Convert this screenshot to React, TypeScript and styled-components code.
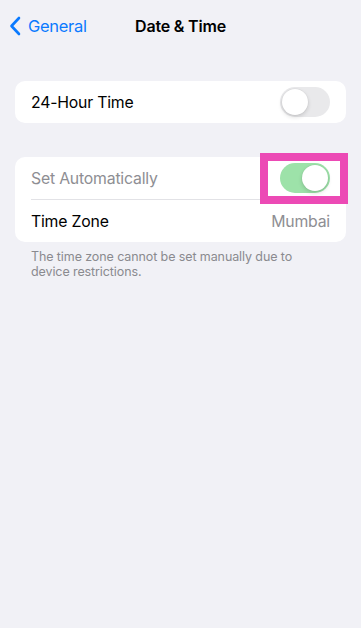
import * as React from 'react';
import styled, { createGlobalStyle } from 'styled-components';

const GlobalStyle = createGlobalStyle`
  html, body {
    margin: 0;
    padding: 0;
    background: #f1f1f6;
  }
  body {
    font-family: Inter, "Liberation Sans", Arial, sans-serif;
    -webkit-font-smoothing: antialiased;
  }
`;

const Page = styled.div`
  min-height: 628px;
  background: #f1f1f6;
  padding: 0 15px;
  box-sizing: border-box;
`;

const NavBar = styled.div`
  position: relative;
  height: 36px;
  padding-top: 8px;
  display: flex;
  align-items: center;
`;

const BackButton = styled.div`
  display: flex;
  align-items: center;
  gap: 7px;
  margin-left: -6px;
  color: #0a7aff;
  font-size: 16.5px;
  letter-spacing: -0.3px;
`;

const Title = styled.div`
  position: absolute;
  left: 0;
  right: 0;
  top: 8px;
  height: 36px;
  display: flex;
  align-items: center;
  justify-content: center;
  font-size: 16px;
  font-weight: 600;
  color: #000;
  letter-spacing: -0.2px;
  pointer-events: none;
`;

const Card = styled.div<{ $top: number }>`
  margin-top: ${(p) => p.$top}px;
  background: #fff;
  border-radius: 10px;
  padding-left: 16px;
`;

const Row = styled.div<{ $divider?: boolean }>`
  height: 42px;
  display: flex;
  align-items: center;
  justify-content: space-between;
  padding-right: 16px;
  border-bottom: ${(p) => (p.$divider ? '1px solid #e2e2e6' : 'none')};
`;

const Label = styled.span<{ $muted?: boolean }>`
  font-size: 15.8px;
  color: ${(p) => (p.$muted ? '#8e8e93' : '#000')};
  letter-spacing: -0.2px;
`;

const Value = styled.span`
  font-size: 15.8px;
  color: #8e8e93;
  letter-spacing: -0.2px;
`;

const Track = styled.div<{ $on?: boolean }>`
  position: relative;
  width: 50px;
  height: 30px;
  border-radius: 15px;
  background: ${(p) => (p.$on ? '#9de2a9' : '#e9e9eb')};
  box-sizing: border-box;
`;

const Knob = styled.div<{ $on?: boolean }>`
  position: absolute;
  top: 2px;
  left: ${(p) => (p.$on ? '22px' : '2px')};
  width: 26px;
  height: 26px;
  border-radius: 50%;
  background: #fff;
  box-shadow: 0 2px 4px rgba(0, 0, 0, 0.15), 0 0 0 0.5px rgba(0, 0, 0, 0.05);
`;

const Highlight = styled.div`
  position: relative;
`;

const HighlightBox = styled.div`
  position: absolute;
  left: -20px;
  right: -18px;
  top: -10px;
  bottom: -11px;
  border: 8px solid #ec4ab5;
  pointer-events: none;
`;

const Footnote = styled.p`
  margin: 7px 0 0;
  padding: 0 16px;
  font-size: 12.5px;
  line-height: 15px;
  color: #8a8a8f;
  letter-spacing: -0.1px;
`;

const Toggle: React.FC<{ on?: boolean }> = ({ on }) => (
  <Track $on={on}>
    <Knob $on={on} />
  </Track>
);

const Chevron = () => (
  <svg width="12" height="20" viewBox="0 0 12 20" fill="none">
    <path d="M10 2 L2.5 10 L10 18" stroke="#0a7aff" strokeWidth="2.6" strokeLinecap="round" strokeLinejoin="round" />
  </svg>
);

const App: React.FC = () => {
  return (
    <>
      <GlobalStyle />
      <Page>
        <NavBar>
          <BackButton>
            <Chevron />
            <span>General</span>
          </BackButton>
          <Title>Date &amp; Time</Title>
        </NavBar>
        <Card $top={37}>
          <Row>
            <Label>24-Hour Time</Label>
            <Toggle />
          </Row>
        </Card>
        <Card $top={34}>
          <Row $divider>
            <Label $muted>Set Automatically</Label>
            <Highlight>
              <Toggle on />
              <HighlightBox />
            </Highlight>
          </Row>
          <Row>
            <Label>Time Zone</Label>
            <Value>Mumbai</Value>
          </Row>
        </Card>
        <Footnote>
          The time zone cannot be set manually due to device restrictions.
        </Footnote>
      </Page>
    </>
  );
};

export default App;
